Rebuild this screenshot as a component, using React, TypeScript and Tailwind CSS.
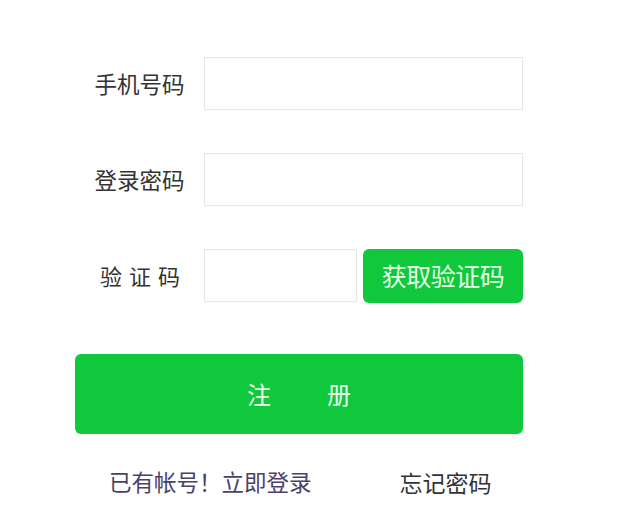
export default function App() {
	return (
		<div className="min-h-[521px] bg-white pl-[75px] pt-[57px] font-['Noto_Sans_CJK_SC',sans-serif]">
			<div className="flex w-[448px] flex-col">
				<div className="flex h-[53px] items-center">
					<label className="w-[129px] text-center text-[22.5px] text-[#333]">手机号码</label>
					<input className="h-[53px] w-[319px] border border-[#e6e6e6] bg-white outline-none" />
				</div>

				<div className="mt-[43px] flex h-[53px] items-center">
					<label className="w-[129px] text-center text-[22.5px] text-[#333]">登录密码</label>
					<input type="password" className="h-[53px] w-[319px] border border-[#e6e6e6] bg-white outline-none" />
				</div>

				<div className="mt-[43px] flex h-[53px] items-center">
					<label className="w-[129px] pl-[8px] text-center text-[22px] tracking-[7px] text-[#333]">验证码</label>
					<input className="h-[53px] w-[153px] border border-[#e6e6e6] bg-white outline-none" />
					<button className="ml-[6px] h-[54px] w-[160px] rounded-[6px] bg-[#10c83c] text-[25px] tracking-[-0.5px] text-[#e6ffe6]">
						获取验证码
					</button>
				</div>

				<button className="mt-[52px] flex h-[80px] w-[448px] items-center justify-center gap-[56px] rounded-[6px] bg-[#10c83c] text-[24px] text-[#e8ffea]">
					<span>注</span>
					<span>册</span>
				</button>

				<div className="mt-[31px] flex items-center">
					<a className="ml-[34px] text-[22.5px] text-[#4a4168]" href="#">已有帐号！立即登录</a>
					<a className="ml-[88px] text-[23px] text-[#333]" href="#">忘记密码</a>
				</div>
			</div>
		</div>
	);
}
